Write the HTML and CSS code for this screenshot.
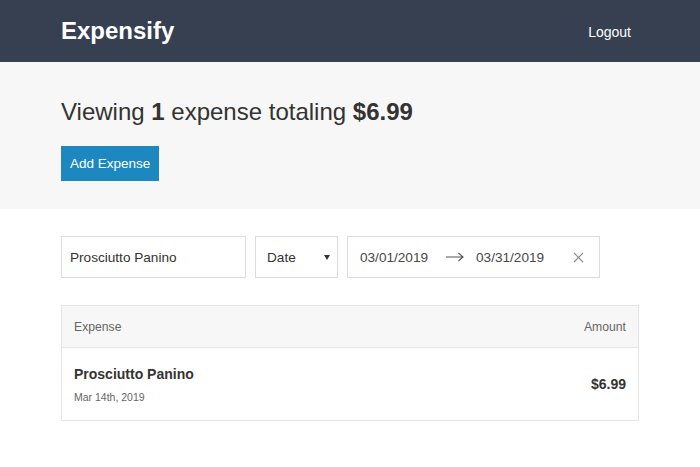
FILE: index.html
```html
<!DOCTYPE html>
<html>
<head>
<meta charset="utf-8">
<link rel="stylesheet" href="styles.css">
</head>
<body>
<header class="header">
  <div class="container header__content">
    <a class="header__title">Expensify</a>
    <button class="button-link">Logout</button>
  </div>
</header>
<section class="page-header">
  <div class="container">
    <h1 class="page-header__title">Viewing <span>1</span> expense totaling <span>$6.99</span></h1>
    <div class="page-header__actions">
      <button class="button">Add Expense</button>
    </div>
  </div>
</section>
<main class="container">
  <div class="input-group">
    <div class="text-input">Prosciutto Panino</div>
    <div class="select">Date <span class="select__arrow"></span></div>
    <div class="date-range">
      <span>03/01/2019</span>
      <svg class="date-range__arrow" width="18" height="12" viewBox="0 0 18 12"><path d="M0 6h17M12.5 2l4.5 4-4.5 4" fill="none" stroke="#555" stroke-width="1.1"/></svg>
      <span>03/31/2019</span>
      <svg class="date-range__clear" width="11" height="11" viewBox="0 0 11 11"><path d="M1 1l9 9M10 1l-9 9" fill="none" stroke="#8a8a8a" stroke-width="1.1"/></svg>
    </div>
  </div>
  <div class="list">
    <div class="list-header">
      <span>Expense</span>
      <span>Amount</span>
    </div>
    <div class="list-item">
      <div class="list-item__main">
        <h3 class="list-item__title">Prosciutto Panino</h3>
        <span class="list-item__sub">Mar 14th, 2019</span>
      </div>
      <h3 class="list-item__data">$6.99</h3>
    </div>
  </div>
</main>
</body>
</html>
```
FILE: styles.css
```css
* { box-sizing: border-box; }
body {
  margin: 0;
  font-family: "Liberation Sans", Arial, sans-serif;
  color: #333332;
  background: #fff;
}
.container {
  width: 578px;
  margin: 0 auto;
}
.header {
  background: #364051;
  height: 62px;
}
.header__content {
  height: 62px;
  display: flex;
  align-items: center;
  justify-content: space-between;
}
.header__title {
  color: #fff;
  font-size: 24px;
  font-weight: bold;
  line-height: 28px;
}
.button-link {
  background: none;
  border: none;
  color: #fff;
  font-family: inherit;
  font-size: 14px;
  padding: 0;
  margin-right: 8px;
  margin-top: 1px;
}
.page-header {
  background: #f7f7f7;
  padding: 35px 0 28px;
}
.page-header__title {
  font-size: 24px;
  font-weight: normal;
  margin: 0 0 19px;
  line-height: 30px;
}
.page-header__title span { font-weight: bold; }
.page-header__actions { display: flex; }
.button {
  background: #1c88bf;
  border: none;
  color: #fff;
  font-family: inherit;
  font-size: 13.5px;
  height: 35px;
  padding: 0 9px;
  white-space: nowrap;
}
.input-group {
  display: flex;
  gap: 9px;
  margin: 27px 0;
}
.text-input, .select, .date-range {
  border: 1px solid #dcdcdc;
  height: 42px;
  display: flex;
  align-items: center;
  font-size: 13.6px;
  color: #333;
}
.text-input {
  width: 185px;
  padding: 0 8px;
}
.select {
  width: 83px;
  padding: 0 7px 0 11px;
  justify-content: space-between;
}
.select__arrow {
  width: 0;
  height: 0;
  border-left: 3px solid transparent;
  border-right: 3px solid transparent;
  border-top: 5px solid #333;
}
.date-range {
  width: 253px;
  padding: 0 0 0 12px;
  color: #484848;
}
.date-range__arrow { margin: 0 12px 0 18px; }
.date-range__clear { margin-left: 29px; }
.list {
  border: 1px solid #e5e5e5;
}
.list-header {
  background: #f7f7f7;
  border-bottom: 1px solid #e5e5e5;
  color: #666;
  display: flex;
  justify-content: space-between;
  align-items: center;
  height: 42px;
  padding: 0 12px;
  font-size: 12.2px;
}
.list-item {
  display: flex;
  justify-content: space-between;
  align-items: center;
  padding: 0 12px;
  height: 72px;
}
.list-item__main {
  display: flex;
  flex-direction: column;
}
.list-item__title {
  font-size: 14px;
  line-height: 16px;
  margin: 0 0 9px;
}
.list-item__sub {
  font-size: 10.5px;
  line-height: 12px;
  color: #666;
}
.list-item__data {
  font-size: 14px;
  margin: 0;
}
```
